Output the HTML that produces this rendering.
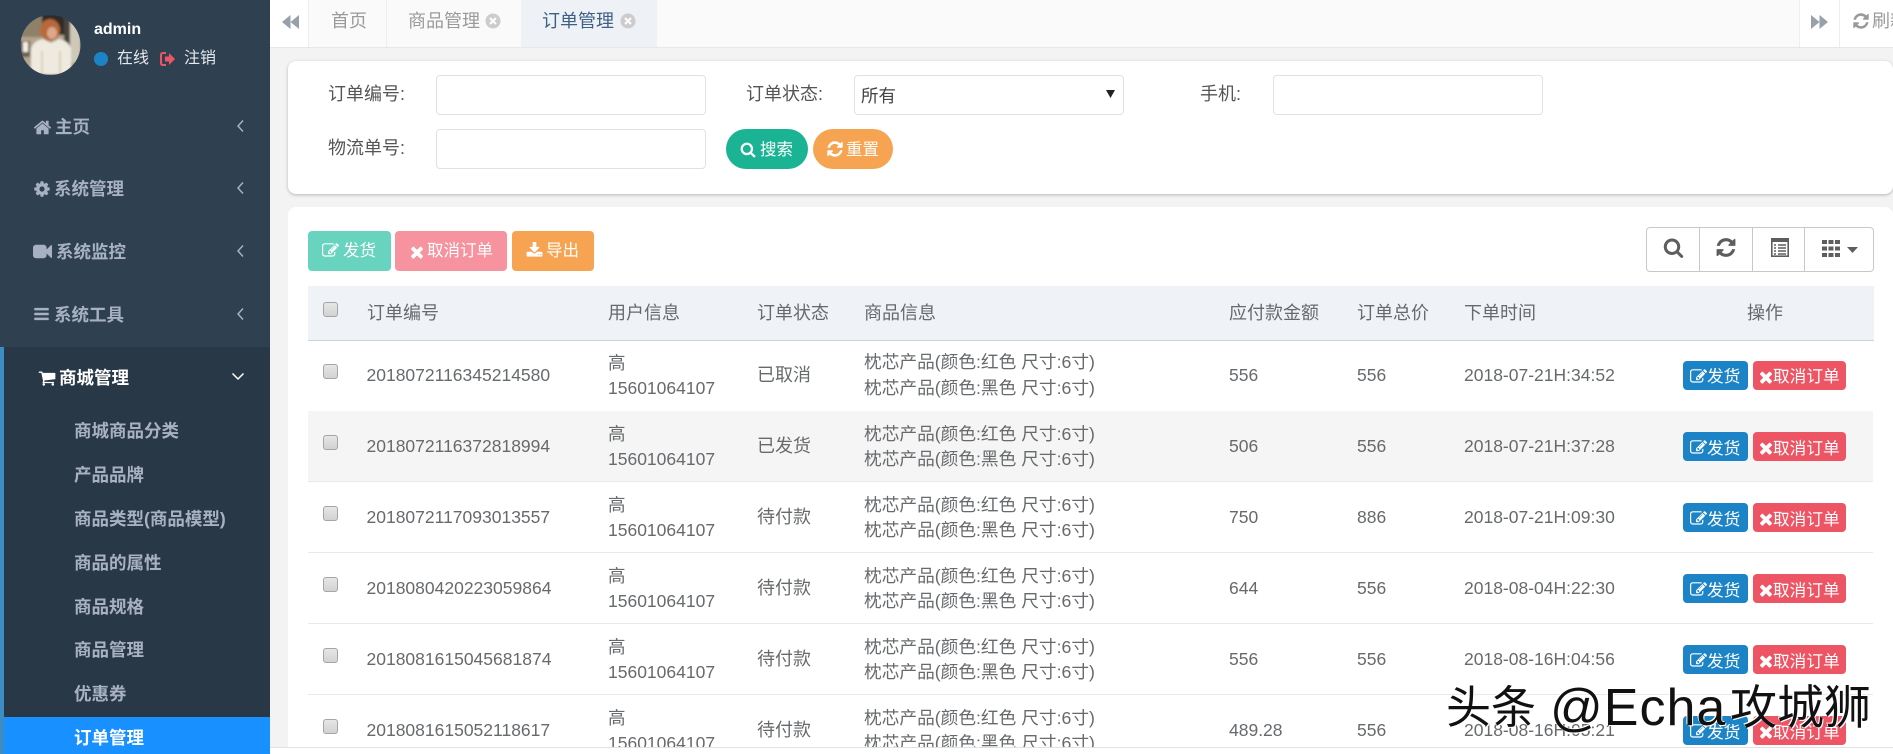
<!DOCTYPE html>
<html lang="zh"><head><meta charset="utf-8"><title>订单管理</title>
<style>
*{box-sizing:border-box;margin:0;padding:0}
html,body{width:1893px;height:754px;overflow:hidden;background:#f3f3f4}
body{position:relative;font-family:"Liberation Sans","Noto Sans CJK SC",sans-serif;font-size:17.5px;color:#676a6c}
.a,.t,svg.i{position:absolute}
.t{white-space:nowrap;line-height:26px;height:26px}
.m{color:#a7b1c2;font-weight:bold;font-size:17.5px}
.in{position:absolute;background:#fff;border:1px solid #e0e1e3;border-radius:4px;height:40px;width:270px}
.l{color:#555;font-size:18px}
.h{color:#676a6c;font-size:18px}
.cb{position:absolute;width:15px;height:15px;border:1px solid #a5a5a5;border-radius:3px;background:linear-gradient(#e6e6e6,#d2d2d2)}
.row{position:absolute;left:308px;width:1565px;height:71px;border-bottom:1px solid #e7eaec}
.row .t{font-size:17.5px}
.row .p{font-size:17.7px}
.row .s{font-size:18px}
.b{position:absolute;border-radius:4px;color:#fff;font-size:16.7px;line-height:29px;height:29px;top:21px;white-space:nowrap}
.b span{position:absolute;top:2px}
.wh{fill:#fff}
</style></head><body>

<!-- sidebar -->
<div class="a" style="left:0;top:0;width:270px;height:754px;background:#2f4050"></div>
<div class="a" style="left:0;top:347px;width:270px;height:407px;background:#293846"></div>
<div class="a" style="left:0;top:347px;width:4px;height:407px;background:#3c8dc5"></div>
<div class="a" style="left:4px;top:717px;width:266px;height:37px;background:#1890ff"></div>

<svg class="i" style="left:20px;top:15px" width="61" height="60" viewBox="0 0 61 60"><defs><clipPath id="av"><circle cx="30.500" cy="30" r="30"/></clipPath><filter id="bl"><feGaussianBlur stdDeviation="1"/></filter></defs><g clip-path="url(#av)"><g filter="url(#bl)"><rect width="61" height="60" fill="#b3a68f"/><rect x="0" y="0" width="22" height="22" fill="#8e8069"/><rect x="22" y="0" width="22" height="20" fill="#2e2a25"/><rect x="44" y="2" width="6" height="30" fill="#47423a"/><rect x="50" y="4" width="11" height="44" fill="#cfc8b8"/><rect x="0" y="26" width="10" height="16" fill="#6a5f4e"/><rect x="3" y="27" width="5" height="10" fill="#f4f1e8"/><ellipse cx="30" cy="15" rx="10" ry="11" fill="#b8693a"/><ellipse cx="32" cy="18" rx="5" ry="6" fill="#dca98f"/><path d="M11 60V34q2-8 12-10l8 4 8-4q10 2 12 10v26z" fill="#efeadf"/><path d="M22 60V36M40 60V36" stroke="#d8d1bf" stroke-width="2"/></g></g></svg>
<div class="t" style="left:94px;top:17px;color:#fff;font-weight:bold;font-size:16px">admin</div>
<svg class="i" style="left:94px;top:52px" width="14" height="14"><circle cx="7" cy="7" r="7" fill="#1c84c6"/></svg>
<div class="t" style="left:117px;top:46px;color:#e4e8ee;font-size:16px">在线</div>
<svg class="i" style="left:160px;top:52px" width="15" height="14" viewBox="0 0 15 14"><path d="M6 1H3Q1 1 1 3v8q0 2 2 2h3" fill="none" stroke="#ed5565" stroke-width="2"/><path d="M5 4.500h4V1l6 6-6 6V9.500H5z" fill="#ed5565"/></svg>
<div class="t" style="left:184px;top:46px;color:#e4e8ee;font-size:16px">注销</div>

<svg class="i" style="left:33px;top:118px" width="19" height="19" viewBox="0 0 1792 1792"><path fill="#a7b1c2" d="M1472 992v480q0 26-19 45t-45 19h-384v-384h-256v384h-384q-26 0-45-19t-19-45v-480q0-1 .5-3t.5-3l575-474 575 474q1 2 1 6zm223-69l-62 74q-8 9-21 11h-3q-13 0-21-7l-692-577-692 577q-12 8-24 7-13-2-21-11l-62-74q-8-10-7-23.500t11-21.500l719-599q32-26 76-26t76 26l244 204v-195q0-14 9-23t23-9h192q14 0 23 9t9 23v408l219 182q10 8 11 21.500t-7 23.500z"/></svg>
<div class="t m" style="left:55px;top:114px">主页</div>
<svg class="i" style="left:33px;top:180px" width="18" height="18" viewBox="0 0 1792 1792"><path fill="#a7b1c2" d="M1152 896q0-106-75-181t-181-75-181 75-75 181 75 181 181 75 181-75 75-181zm512-109v222q0 12-8 23t-20 13l-185 28q-19 54-39 91 35 50 107 138 10 12 10 25t-9 23q-27 37-99 108t-94 71q-12 0-26-9l-138-108q-44 23-91 38-16 136-29 186-7 28-36 28h-222q-14 0-24.500-8.500t-11.500-21.500l-28-184q-49-16-90-37l-141 107q-10 9-25 9-14 0-25-11-126-114-165-168-7-10-7-23 0-12 8-23 15-21 51-66.500t54-70.500q-27-50-41-99l-183-27q-13-2-21-12.500t-8-23.500v-222q0-12 8-23t19-13l186-28q14-46 39-92-40-57-107-138-10-12-10-24 0-10 9-23 26-36 98.500-107.500t94.500-71.500q13 0 26 10l138 107q44-23 91-38 16-136 29-186 7-28 36-28h222q14 0 24.500 8.500t11.500 21.500l28 184q49 16 90 37l142-107q9-9 24-9 13 0 25 10 129 119 165 170 7 8 7 22 0 12-8 23-15 21-51 66.500t-54 70.500q26 50 41 98l183 28q13 2 21 12.500t8 23.500z"/></svg>
<div class="t m" style="left:54px;top:176px">系统管理</div>
<svg class="i" style="left:33px;top:242px" width="19" height="19" viewBox="0 0 1792 1792"><path fill="#a7b1c2" d="M1792 352v1088q0 42-39 59-13 5-25 5-27 0-45-19l-403-403v166q0 119-84.500 203.500t-203.500 84.500h-704q-119 0-203.500-84.500t-84.500-203.500v-704q0-119 84.500-203.500t203.500-84.500h704q119 0 203.500 84.500t84.500 203.500v165l403-402q18-19 45-19 12 0 25 5 39 17 39 59z"/></svg>
<div class="t m" style="left:56px;top:239px">系统监控</div>
<svg class="i" style="left:33px;top:305px" width="17" height="18" viewBox="0 0 1792 1792"><path fill="#a7b1c2" d="M1664 1344v128q0 26-19 45t-45 19h-1408q-26 0-45-19t-19-45v-128q0-26 19-45t45-19h1408q26 0 45 19t19 45zm0-512v128q0 26-19 45t-45 19h-1408q-26 0-45-19t-19-45v-128q0-26 19-45t45-19h1408q26 0 45 19t19 45zm0-512v128q0 26-19 45t-45 19h-1408q-26 0-45-19t-19-45v-128q0-26 19-45t45-19h1408q26 0 45 19t19 45z"/></svg>
<div class="t m" style="left:54px;top:302px">系统工具</div>
<svg class="i" style="left:38px;top:369px" width="18" height="18" viewBox="0 0 1792 1792"><path fill="#fff" d="M704 1536q0 52-38 90t-90 38-90-38-38-90 38-90 90-38 90 38 38 90zm896 0q0 52-38 90t-90 38-90-38-38-90 38-90 90-38 90 38 38 90zm128-1088v512q0 24-16.500 42.500t-40.500 20.500l-1044 122q13 60 13 70 0 16-24 64h920q26 0 45 19t19 45-19 45-45 19h-1024q-26 0-45-19t-19-45q0-11 8-31.500t16-36 21.500-40 15.500-29.500l-177-823h-204q-26 0-45-19t-19-45 19-45 45-19h256q16 0 28.500 6.500t19.500 15.500 13 24.500 8 26 5.500 29.500 4.500 26h1201q26 0 45 19t19 45z"/></svg>
<div class="t m" style="left:59px;top:365px;color:#fff">商城管理</div>
<svg class="i" style="left:236px;top:119px" width="8" height="14"><path d="M7 1.500 2 7l5 5.500" fill="none" stroke="#a7b1c2" stroke-width="1.500"/></svg>
<svg class="i" style="left:236px;top:181px" width="8" height="14"><path d="M7 1.500 2 7l5 5.500" fill="none" stroke="#a7b1c2" stroke-width="1.500"/></svg>
<svg class="i" style="left:236px;top:244px" width="8" height="14"><path d="M7 1.500 2 7l5 5.500" fill="none" stroke="#a7b1c2" stroke-width="1.500"/></svg>
<svg class="i" style="left:236px;top:307px" width="8" height="14"><path d="M7 1.500 2 7l5 5.500" fill="none" stroke="#a7b1c2" stroke-width="1.500"/></svg>
<svg class="i" style="left:231px;top:372px" width="14" height="9"><path d="M1.500 1.500 7 7l5.500-5.500" fill="none" stroke="#fff" stroke-width="1.500"/></svg>
<div class="t m" style="left:74px;top:418px">商城商品分类</div>
<div class="t m" style="left:74px;top:462px">产品品牌</div>
<div class="t m" style="left:74px;top:506px">商品类型(商品模型)</div>
<div class="t m" style="left:74px;top:550px">商品的属性</div>
<div class="t m" style="left:74px;top:594px">商品规格</div>
<div class="t m" style="left:74px;top:637px">商品管理</div>
<div class="t m" style="left:74px;top:681px">优惠券</div>
<div class="t m" style="left:74px;top:725px;color:#fff">订单管理</div>

<!-- top tabs -->
<div class="a" style="left:270px;top:0;width:1623px;height:48px;background:#fafafa;border-bottom:1px solid #e7e7e7"></div>
<div class="a" style="left:270px;top:0;width:39px;height:47px;background:#fff;border-right:1px solid #eee"></div>
<svg class="i" style="left:282px;top:14px" width="17" height="16"><path d="M8.500 1v14L0 8zM17 1v14L8.500 8z" fill="#97a0ab"/></svg>
<div class="a" style="left:386px;top:0;width:1px;height:47px;background:#eee"></div>
<div class="t" style="left:331px;top:8px;color:#9a9a9a;font-size:18px">首页</div>
<div class="t" style="left:408px;top:8px;color:#9a9a9a;font-size:18px">商品管理</div>
<svg class="i" style="left:485px;top:13px" width="16" height="16"><circle cx="8" cy="8" r="7.500" fill="#ccc"/><path d="M5 5l6 6M11 5l-6 6" stroke="#fff" stroke-width="2"/></svg>
<div class="a" style="left:521px;top:0;width:136px;height:47px;background:#eef1f5"></div>
<div class="t" style="left:542px;top:8px;color:#3f5f85;font-size:18px">订单管理</div>
<svg class="i" style="left:620px;top:13px" width="16" height="16"><circle cx="8" cy="8" r="7.500" fill="#ccc"/><path d="M5 5l6 6M11 5l-6 6" stroke="#fff" stroke-width="2"/></svg>
<div class="a" style="left:1799px;top:0;width:94px;height:47px;background:#fff;border-left:1px solid #eee"></div>
<div class="a" style="left:1839px;top:0;width:1px;height:47px;background:#eee"></div>
<svg class="i" style="left:1811px;top:14px" width="17" height="16"><path d="M0 1v14l8.500-7zM8.500 1v14l8.500-7z" fill="#97a0ab"/></svg>
<svg class="i" style="left:1852px;top:12px" width="18" height="18" viewBox="0 0 1792 1792"><path fill="#9a9a9a" d="M1639 1056q0 5-1 7-64 268-268 434.500t-478 166.500q-146 0-282.500-55t-243.500-157l-129 129q-19 19-45 19t-45-19-19-45v-448q0-26 19-45t45-19h448q26 0 45 19t19 45-19 45l-137 137q71 66 161 102t187 36q134 0 250-65t186-179q11-17 53-117 8-23 30-23h192q13 0 22.500 9.500t9.500 22.500zm25-800v448q0 26-19 45t-45 19h-448q-26 0-45-19t-19-45 19-45l138-138q-148-137-349-137-134 0-250 65t-186 179q-11 17-53 117-8 23-30 23h-199q-13 0-22.500-9.500t-9.500-22.500v-7q65-268 270-434.500t480-166.500q146 0 284 55.500t245 156.500l130-129q19-19 45-19t45 19 19 45z"/></svg>
<div class="t" style="left:1872px;top:8px;color:#9a9a9a;font-size:18px">刷新</div>

<!-- search panel -->
<div class="a" style="left:288px;top:61px;width:1605px;height:133px;background:#fff;border-radius:8px;box-shadow:0 1px 3px rgba(0,0,0,.25)"></div>
<div class="t l" style="left:328px;top:81px">订单编号:</div>
<div class="in" style="left:436px;top:75px"></div>
<div class="t l" style="left:746px;top:81px">订单状态:</div>
<div class="in" style="left:854px;top:75px"></div>
<div class="t l" style="left:861px;top:83px;color:#444;font-size:17.500px">所有</div>
<svg class="i" style="left:1106px;top:90px" width="9" height="8"><path d="M0 0h9L4.500 8z" fill="#222"/></svg>
<div class="t l" style="left:1200px;top:81px">手机:</div>
<div class="in" style="left:1273px;top:75px"></div>
<div class="t l" style="left:328px;top:135px">物流单号:</div>
<div class="in" style="left:436px;top:129px"></div>
<div class="a" style="left:726px;top:129px;width:82px;height:40px;border-radius:20px;background:#1ab394"></div>
<svg class="i" style="left:740px;top:141px" width="16" height="17" viewBox="0 0 1792 1792"><path class="wh" d="M1216 832q0-185-131.500-316.500t-316.500-131.500-316.500 131.500-131.500 316.500 131.500 316.500 316.500 131.500 316.500-131.500 131.500-316.500zm512 832q0 52-38 90t-90 38q-54 0-90-38l-343-342q-179 124-399 124-143 0-273.500-55.500t-225-150-150-225-55.500-273.500 55.500-273.500 150-225 225-150 273.500-55.500 273.500 55.500 225 150 150 225 55.500 273.500q0 220-124 399l343 343q37 37 37 90z"/></svg>
<div class="t" style="left:760px;top:137px;color:#fff;font-size:16.500px">搜索</div>
<div class="a" style="left:813px;top:129px;width:80px;height:40px;border-radius:20px;background:#f6a452"></div>
<svg class="i" style="left:826px;top:140px" width="18" height="18" viewBox="0 0 1792 1792"><path class="wh" d="M1639 1056q0 5-1 7-64 268-268 434.500t-478 166.500q-146 0-282.500-55t-243.500-157l-129 129q-19 19-45 19t-45-19-19-45v-448q0-26 19-45t45-19h448q26 0 45 19t19 45-19 45l-137 137q71 66 161 102t187 36q134 0 250-65t186-179q11-17 53-117 8-23 30-23h192q13 0 22.500 9.500t9.500 22.500zm25-800v448q0 26-19 45t-45 19h-448q-26 0-45-19t-19-45 19-45l138-138q-148-137-349-137-134 0-250 65t-186 179q-11 17-53 117-8 23-30 23h-199q-13 0-22.500-9.500t-9.500-22.500v-7q65-268 270-434.500t480-166.500q146 0 284 55.500t245 156.500l130-129q19-19 45-19t45 19 19 45z"/></svg>
<div class="t" style="left:846px;top:137px;color:#fff;font-size:16.500px">重置</div>

<!-- table panel -->
<div class="a" style="left:288px;top:207px;width:1605px;height:547px;background:#fff;border-radius:8px 8px 0 0"></div>
<div class="a" style="left:308px;top:231px;width:83px;height:40px;border-radius:4px;background:#68d3bf"></div>
<svg class="i" style="left:322px;top:242px" width="17" height="17" viewBox="0 0 1792 1792"><path class="wh" d="M888 1184l116-116-152-152-116 116v56h96v96h56zm440-720q-16-16-33 1l-350 350q-17 17-1 33t33-1l350-350q17-17 1-33zm80 594v190q0 119-84.500 203.500t-203.500 84.500h-832q-119 0-203.500-84.500t-84.500-203.500v-832q0-119 84.500-203.500t203.500-84.500h832q63 0 117 25 15 7 18 23 3 17-9 29l-49 49q-14 14-32 8-23-6-45-6h-832q-66 0-113 47t-47 113v832q0 66 47 113t113 47h832q66 0 113-47t47-113v-126q0-13 9-22l64-64q15-15 35-7t20 29zm-96-738l288 288-672 672h-288v-288zm444 132l-92 92-288-288 92-92q28-28 68-28t68 28l152 152q28 28 28 68t-28 68z"/></svg>
<div class="t" style="left:343px;top:238px;color:#fff;font-size:16.500px">发货</div>
<div class="a" style="left:395px;top:231px;width:112px;height:40px;border-radius:4px;background:#f6939f"></div>
<svg class="i" style="left:408px;top:243px" width="18" height="18" viewBox="0 0 1792 1792"><path class="wh" d="M1490 1322q0 40-28 68l-136 136q-28 28-68 28t-68-28l-294-294-294 294q-28 28-68 28t-68-28l-136-136q-28-28-28-68t28-68l294-294-294-294q-28-28-28-68t28-68l136-136q28-28 68-28t68 28l294 294 294-294q28-28 68-28t68 28l136 136q28 28 28 68t-28 68l-294 294 294 294q28 28 28 68z"/></svg>
<div class="t" style="left:427px;top:238px;color:#fff;font-size:16.500px">取消订单</div>
<div class="a" style="left:512px;top:231px;width:82px;height:40px;border-radius:4px;background:#f6a452"></div>
<svg class="i" style="left:526px;top:242px" width="17" height="17" viewBox="0 0 1792 1792"><path class="wh" d="M1344 1344q0-26-19-45t-45-19-45 19-19 45 19 45 45 19 45-19 19-45zm256 0q0-26-19-45t-45-19-45 19-19 45 19 45 45 19 45-19 19-45zm128-224v320q0 40-28 68t-68 28h-1472q-40 0-68-28t-28-68v-320q0-40 28-68t68-28h465l135 136q58 56 136 56t136-56l136-136h464q40 0 68 28t28 68zm-325-569q17 41-14 70l-448 448q-18 19-45 19t-45-19l-448-448q-31-29-14-70 17-39 59-39h256v-448q0-26 19-45t45-19h256q26 0 45 19t19 45v448h256q42 0 59 39z"/></svg>
<div class="t" style="left:546px;top:238px;color:#fff;font-size:16.500px">导出</div>

<div class="a" style="left:1646px;top:227px;width:228px;height:45px;border:1px solid #c8c8c8;border-radius:4px;background:#fff"></div>
<div class="a" style="left:1699px;top:227px;width:1px;height:45px;background:#c8c8c8"></div>
<div class="a" style="left:1752px;top:227px;width:1px;height:45px;background:#c8c8c8"></div>
<div class="a" style="left:1804px;top:227px;width:1px;height:45px;background:#c8c8c8"></div>
<svg class="i" style="left:1663px;top:237px" width="21" height="21" viewBox="0 0 1792 1792"><path fill="#5e5e5e" d="M1216 832q0-185-131.500-316.500t-316.500-131.500-316.500 131.500-131.500 316.500 131.500 316.500 316.500 131.500 316.500-131.500 131.500-316.500zm512 832q0 52-38 90t-90 38q-54 0-90-38l-343-342q-179 124-399 124-143 0-273.500-55.500t-225-150-150-225-55.500-273.500 55.500-273.500 150-225 225-150 273.500-55.500 273.500 55.500 225 150 150 225 55.500 273.500q0 220-124 399l343 343q37 37 37 90z"/></svg>
<svg class="i" style="left:1715px;top:236px" width="22" height="23" viewBox="0 0 1792 1792"><path fill="#5e5e5e" d="M1639 1056q0 5-1 7-64 268-268 434.500t-478 166.500q-146 0-282.500-55t-243.500-157l-129 129q-19 19-45 19t-45-19-19-45v-448q0-26 19-45t45-19h448q26 0 45 19t19 45-19 45l-137 137q71 66 161 102t187 36q134 0 250-65t186-179q11-17 53-117 8-23 30-23h192q13 0 22.500 9.500t9.500 22.500zm25-800v448q0 26-19 45t-45 19h-448q-26 0-45-19t-19-45 19-45l138-138q-148-137-349-137-134 0-250 65t-186 179q-11 17-53 117-8 23-30 23h-199q-13 0-22.500-9.500t-9.500-22.500v-7q65-268 270-434.500t480-166.500q146 0 284 55.500t245 156.500l130-129q19-19 45-19t45 19 19 45z"/></svg>
<svg class="i" style="left:1771px;top:238px" width="18" height="19" viewBox="0 0 18 19"><rect x=".8" y=".8" width="16.400" height="17.400" fill="#fff" stroke="#5e5e5e" stroke-width="1.600"/><rect x="1" y="1" width="16" height="3" fill="#5e5e5e"/><path d="M3 7h2M3 10h2M3 13h2M3 16h2M7 7h8M7 10h8M7 13h8M7 16h8" stroke="#5e5e5e" stroke-width="1.500"/></svg>
<svg class="i" style="left:1822px;top:240px" width="18" height="17"><path d="M0 0h5v4H0zM6.500 0h5v4h-5zM13 0h5v4h-5zM0 6.500h5v4H0zM6.500 6.500h5v4h-5zM13 6.500h5v4h-5zM0 13h5v4H0zM6.500 13h5v4h-5zM13 13h5v4h-5z" fill="#5e5e5e"/></svg>
<svg class="i" style="left:1847px;top:247px" width="11" height="6"><path d="M0 0h11L5.500 6z" fill="#5e5e5e"/></svg>

<!-- table head -->
<div class="a" style="left:308px;top:286px;width:1566px;height:55px;background:#eff2f7;border-bottom:1px solid #cfd2d6"></div>
<div class="cb" style="left:323px;top:302px"></div>
<div class="t h" style="left:367px;top:300px">订单编号</div>
<div class="t h" style="left:608px;top:300px">用户信息</div>
<div class="t h" style="left:757px;top:300px">订单状态</div>
<div class="t h" style="left:864px;top:300px">商品信息</div>
<div class="t h" style="left:1229px;top:300px">应付款金额</div>
<div class="t h" style="left:1357px;top:300px">订单总价</div>
<div class="t h" style="left:1464px;top:300px">下单时间</div>
<div class="t h" style="left:1747px;top:300px">操作</div>

<!-- rows -->
<div class="a" style="left:0;top:0;width:1893px;height:747px;overflow:hidden">

<div class="row" style="top:341px">
<div class="cb" style="left:15px;top:23px"></div>
<div class="t" style="left:58.500px;top:21px">2018072116345214580</div>
<div class="t" style="left:300px;top:9px">高</div><div class="t" style="left:300px;top:34px">15601064107</div>
<div class="t s" style="left:449px;top:21px">已取消</div>
<div class="t p" style="left:556px;top:8px">枕芯产品(颜色:红色 尺寸:6寸)</div><div class="t p" style="left:556px;top:34px">枕芯产品(颜色:黑色 尺寸:6寸)</div>
<div class="t" style="left:921px;top:21px">556</div><div class="t" style="left:1049px;top:21px">556</div>
<div class="t" style="left:1156px;top:21px">2018-07-21H:34:52</div>
<div class="b" style="left:1375px;top:20px;width:65px;background:#1c84c6"><svg class="i" style="left:7px;top:7px" width="17" height="17" viewBox="0 0 1792 1792"><path class="wh" d="M888 1184l116-116-152-152-116 116v56h96v96h56zm440-720q-16-16-33 1l-350 350q-17 17-1 33t33-1l350-350q17-17 1-33zm80 594v190q0 119-84.500 203.500t-203.500 84.500h-832q-119 0-203.500-84.500t-84.500-203.500v-832q0-119 84.500-203.500t203.500-84.500h832q63 0 117 25 15 7 18 23 3 17-9 29l-49 49q-14 14-32 8-23-6-45-6h-832q-66 0-113 47t-47 113v832q0 66 47 113t113 47h832q66 0 113-47t47-113v-126q0-13 9-22l64-64q15-15 35-7t20 29zm-96-738l288 288-672 672h-288v-288zm444 132l-92 92-288-288 92-92q28-28 68-28t68 28l152 152q28 28 28 68t-28 68z"/></svg><span style="left:24px;top:1px">发货</span></div>
<div class="b" style="left:1445px;top:20px;width:93px;background:#ed5565"><svg class="i" style="left:4px;top:7px" width="18" height="18" viewBox="0 0 1792 1792"><path class="wh" d="M1490 1322q0 40-28 68l-136 136q-28 28-68 28t-68-28l-294-294-294 294q-28 28-68 28t-68-28l-136-136q-28-28-28-68t28-68l294-294-294-294q-28-28-28-68t28-68l136-136q28-28 68-28t68 28l294 294 294-294q28-28 68-28t68 28l136 136q28 28 28 68t-28 68l-294 294 294 294q28 28 28 68z"/></svg><span style="left:20px;top:1px">取消订单</span></div>
</div>

<div class="row" style="top:411px;background:#f5f5f5">
<div class="cb" style="left:15px;top:24px"></div>
<div class="t" style="left:58.500px;top:22px">2018072116372818994</div>
<div class="t" style="left:300px;top:10px">高</div><div class="t" style="left:300px;top:35px">15601064107</div>
<div class="t s" style="left:449px;top:22px">已发货</div>
<div class="t p" style="left:556px;top:10px">枕芯产品(颜色:红色 尺寸:6寸)</div><div class="t p" style="left:556px;top:35px">枕芯产品(颜色:黑色 尺寸:6寸)</div>
<div class="t" style="left:921px;top:22px">506</div><div class="t" style="left:1049px;top:22px">556</div>
<div class="t" style="left:1156px;top:22px">2018-07-21H:37:28</div>
<div class="b" style="left:1375px;width:65px;background:#1c84c6"><svg class="i" style="left:7px;top:7px" width="17" height="17" viewBox="0 0 1792 1792"><path class="wh" d="M888 1184l116-116-152-152-116 116v56h96v96h56zm440-720q-16-16-33 1l-350 350q-17 17-1 33t33-1l350-350q17-17 1-33zm80 594v190q0 119-84.500 203.500t-203.500 84.500h-832q-119 0-203.500-84.500t-84.500-203.500v-832q0-119 84.500-203.500t203.500-84.500h832q63 0 117 25 15 7 18 23 3 17-9 29l-49 49q-14 14-32 8-23-6-45-6h-832q-66 0-113 47t-47 113v832q0 66 47 113t113 47h832q66 0 113-47t47-113v-126q0-13 9-22l64-64q15-15 35-7t20 29zm-96-738l288 288-672 672h-288v-288zm444 132l-92 92-288-288 92-92q28-28 68-28t68 28l152 152q28 28 28 68t-28 68z"/></svg><span style="left:24px">发货</span></div>
<div class="b" style="left:1445px;width:93px;background:#ed5565"><svg class="i" style="left:4px;top:7px" width="18" height="18" viewBox="0 0 1792 1792"><path class="wh" d="M1490 1322q0 40-28 68l-136 136q-28 28-68 28t-68-28l-294-294-294 294q-28 28-68 28t-68-28l-136-136q-28-28-28-68t28-68l294-294-294-294q-28-28-28-68t28-68l136-136q28-28 68-28t68 28l294 294 294-294q28-28 68-28t68 28l136 136q28 28 28 68t-28 68l-294 294 294 294q28 28 28 68z"/></svg><span style="left:20px">取消订单</span></div>
</div>

<div class="row" style="top:482px">
<div class="cb" style="left:15px;top:24px"></div>
<div class="t" style="left:58.500px;top:22px">2018072117093013557</div>
<div class="t" style="left:300px;top:10px">高</div><div class="t" style="left:300px;top:35px">15601064107</div>
<div class="t s" style="left:449px;top:22px">待付款</div>
<div class="t p" style="left:556px;top:10px">枕芯产品(颜色:红色 尺寸:6寸)</div><div class="t p" style="left:556px;top:35px">枕芯产品(颜色:黑色 尺寸:6寸)</div>
<div class="t" style="left:921px;top:22px">750</div><div class="t" style="left:1049px;top:22px">886</div>
<div class="t" style="left:1156px;top:22px">2018-07-21H:09:30</div>
<div class="b" style="left:1375px;width:65px;background:#1c84c6"><svg class="i" style="left:7px;top:7px" width="17" height="17" viewBox="0 0 1792 1792"><path class="wh" d="M888 1184l116-116-152-152-116 116v56h96v96h56zm440-720q-16-16-33 1l-350 350q-17 17-1 33t33-1l350-350q17-17 1-33zm80 594v190q0 119-84.500 203.500t-203.500 84.500h-832q-119 0-203.500-84.500t-84.500-203.500v-832q0-119 84.500-203.500t203.500-84.500h832q63 0 117 25 15 7 18 23 3 17-9 29l-49 49q-14 14-32 8-23-6-45-6h-832q-66 0-113 47t-47 113v832q0 66 47 113t113 47h832q66 0 113-47t47-113v-126q0-13 9-22l64-64q15-15 35-7t20 29zm-96-738l288 288-672 672h-288v-288zm444 132l-92 92-288-288 92-92q28-28 68-28t68 28l152 152q28 28 28 68t-28 68z"/></svg><span style="left:24px">发货</span></div>
<div class="b" style="left:1445px;width:93px;background:#ed5565"><svg class="i" style="left:4px;top:7px" width="18" height="18" viewBox="0 0 1792 1792"><path class="wh" d="M1490 1322q0 40-28 68l-136 136q-28 28-68 28t-68-28l-294-294-294 294q-28 28-68 28t-68-28l-136-136q-28-28-28-68t28-68l294-294-294-294q-28-28-28-68t28-68l136-136q28-28 68-28t68 28l294 294 294-294q28-28 68-28t68 28l136 136q28 28 28 68t-28 68l-294 294 294 294q28 28 28 68z"/></svg><span style="left:20px">取消订单</span></div>
</div>

<div class="row" style="top:553px">
<div class="cb" style="left:15px;top:24px"></div>
<div class="t" style="left:58.500px;top:22px">2018080420223059864</div>
<div class="t" style="left:300px;top:10px">高</div><div class="t" style="left:300px;top:35px">15601064107</div>
<div class="t s" style="left:449px;top:22px">待付款</div>
<div class="t p" style="left:556px;top:10px">枕芯产品(颜色:红色 尺寸:6寸)</div><div class="t p" style="left:556px;top:35px">枕芯产品(颜色:黑色 尺寸:6寸)</div>
<div class="t" style="left:921px;top:22px">644</div><div class="t" style="left:1049px;top:22px">556</div>
<div class="t" style="left:1156px;top:22px">2018-08-04H:22:30</div>
<div class="b" style="left:1375px;width:65px;background:#1c84c6"><svg class="i" style="left:7px;top:7px" width="17" height="17" viewBox="0 0 1792 1792"><path class="wh" d="M888 1184l116-116-152-152-116 116v56h96v96h56zm440-720q-16-16-33 1l-350 350q-17 17-1 33t33-1l350-350q17-17 1-33zm80 594v190q0 119-84.500 203.500t-203.500 84.500h-832q-119 0-203.500-84.500t-84.500-203.500v-832q0-119 84.500-203.500t203.500-84.500h832q63 0 117 25 15 7 18 23 3 17-9 29l-49 49q-14 14-32 8-23-6-45-6h-832q-66 0-113 47t-47 113v832q0 66 47 113t113 47h832q66 0 113-47t47-113v-126q0-13 9-22l64-64q15-15 35-7t20 29zm-96-738l288 288-672 672h-288v-288zm444 132l-92 92-288-288 92-92q28-28 68-28t68 28l152 152q28 28 28 68t-28 68z"/></svg><span style="left:24px">发货</span></div>
<div class="b" style="left:1445px;width:93px;background:#ed5565"><svg class="i" style="left:4px;top:7px" width="18" height="18" viewBox="0 0 1792 1792"><path class="wh" d="M1490 1322q0 40-28 68l-136 136q-28 28-68 28t-68-28l-294-294-294 294q-28 28-68 28t-68-28l-136-136q-28-28-28-68t28-68l294-294-294-294q-28-28-28-68t28-68l136-136q28-28 68-28t68 28l294 294 294-294q28-28 68-28t68 28l136 136q28 28 28 68t-28 68l-294 294 294 294q28 28 28 68z"/></svg><span style="left:20px">取消订单</span></div>
</div>

<div class="row" style="top:624px">
<div class="cb" style="left:15px;top:24px"></div>
<div class="t" style="left:58.500px;top:22px">2018081615045681874</div>
<div class="t" style="left:300px;top:10px">高</div><div class="t" style="left:300px;top:35px">15601064107</div>
<div class="t s" style="left:449px;top:22px">待付款</div>
<div class="t p" style="left:556px;top:10px">枕芯产品(颜色:红色 尺寸:6寸)</div><div class="t p" style="left:556px;top:35px">枕芯产品(颜色:黑色 尺寸:6寸)</div>
<div class="t" style="left:921px;top:22px">556</div><div class="t" style="left:1049px;top:22px">556</div>
<div class="t" style="left:1156px;top:22px">2018-08-16H:04:56</div>
<div class="b" style="left:1375px;width:65px;background:#1c84c6"><svg class="i" style="left:7px;top:7px" width="17" height="17" viewBox="0 0 1792 1792"><path class="wh" d="M888 1184l116-116-152-152-116 116v56h96v96h56zm440-720q-16-16-33 1l-350 350q-17 17-1 33t33-1l350-350q17-17 1-33zm80 594v190q0 119-84.500 203.500t-203.500 84.500h-832q-119 0-203.500-84.500t-84.500-203.500v-832q0-119 84.500-203.500t203.500-84.500h832q63 0 117 25 15 7 18 23 3 17-9 29l-49 49q-14 14-32 8-23-6-45-6h-832q-66 0-113 47t-47 113v832q0 66 47 113t113 47h832q66 0 113-47t47-113v-126q0-13 9-22l64-64q15-15 35-7t20 29zm-96-738l288 288-672 672h-288v-288zm444 132l-92 92-288-288 92-92q28-28 68-28t68 28l152 152q28 28 28 68t-28 68z"/></svg><span style="left:24px">发货</span></div>
<div class="b" style="left:1445px;width:93px;background:#ed5565"><svg class="i" style="left:4px;top:7px" width="18" height="18" viewBox="0 0 1792 1792"><path class="wh" d="M1490 1322q0 40-28 68l-136 136q-28 28-68 28t-68-28l-294-294-294 294q-28 28-68 28t-68-28l-136-136q-28-28-28-68t28-68l294-294-294-294q-28-28-28-68t28-68l136-136q28-28 68-28t68 28l294 294 294-294q28-28 68-28t68 28l136 136q28 28 28 68t-28 68l-294 294 294 294q28 28 28 68z"/></svg><span style="left:20px">取消订单</span></div>
</div>

<div class="row" style="top:695px">
<div class="cb" style="left:15px;top:24px"></div>
<div class="t" style="left:58.500px;top:22px">2018081615052118617</div>
<div class="t" style="left:300px;top:10px">高</div><div class="t" style="left:300px;top:35px">15601064107</div>
<div class="t s" style="left:449px;top:22px">待付款</div>
<div class="t p" style="left:556px;top:10px">枕芯产品(颜色:红色 尺寸:6寸)</div><div class="t p" style="left:556px;top:35px">枕芯产品(颜色:黑色 尺寸:6寸)</div>
<div class="t" style="left:921px;top:22px">489.28</div><div class="t" style="left:1049px;top:22px">556</div>
<div class="t" style="left:1156px;top:22px">2018-08-16H:05:21</div>
<div class="b" style="left:1375px;width:65px;background:#1c84c6"><svg class="i" style="left:7px;top:7px" width="17" height="17" viewBox="0 0 1792 1792"><path class="wh" d="M888 1184l116-116-152-152-116 116v56h96v96h56zm440-720q-16-16-33 1l-350 350q-17 17-1 33t33-1l350-350q17-17 1-33zm80 594v190q0 119-84.500 203.500t-203.500 84.500h-832q-119 0-203.500-84.500t-84.500-203.500v-832q0-119 84.500-203.500t203.500-84.500h832q63 0 117 25 15 7 18 23 3 17-9 29l-49 49q-14 14-32 8-23-6-45-6h-832q-66 0-113 47t-47 113v832q0 66 47 113t113 47h832q66 0 113-47t47-113v-126q0-13 9-22l64-64q15-15 35-7t20 29zm-96-738l288 288-672 672h-288v-288zm444 132l-92 92-288-288 92-92q28-28 68-28t68 28l152 152q28 28 28 68t-28 68z"/></svg><span style="left:24px">发货</span></div>
<div class="b" style="left:1445px;width:93px;background:#ed5565"><svg class="i" style="left:4px;top:7px" width="18" height="18" viewBox="0 0 1792 1792"><path class="wh" d="M1490 1322q0 40-28 68l-136 136q-28 28-68 28t-68-28l-294-294-294 294q-28 28-68 28t-68-28l-136-136q-28-28-28-68t28-68l294-294-294-294q-28-28-28-68t28-68l136-136q28-28 68-28t68 28l294 294 294-294q28-28 68-28t68 28l136 136q28 28 28 68t-28 68l-294 294 294 294q28 28 28 68z"/></svg><span style="left:20px">取消订单</span></div>
</div>
</div>

<!-- footer -->
<div class="a" style="left:270px;top:747px;width:1623px;height:7px;background:#fff;border-top:1px solid #e2e2e2"></div>

<!-- watermark -->
<div class="a" style="left:1446px;top:682px;height:52px;line-height:52px;font-size:45px;white-space:nowrap;color:#111;text-shadow:1px 1px 0 #fff,-1px -1px 0 #fff">头条</div>
<div class="a" style="left:1550px;top:682px;height:52px;line-height:52px;font-size:52px;white-space:nowrap;color:#111;letter-spacing:1px;text-shadow:1px 1px 0 #fff,-1px -1px 0 #fff">@Echa</div>
<div class="a" style="left:1730px;top:682px;height:52px;line-height:52px;font-size:47px;white-space:nowrap;color:#111;text-shadow:1px 1px 0 #fff,-1px -1px 0 #fff">攻城狮</div>
</body></html>
